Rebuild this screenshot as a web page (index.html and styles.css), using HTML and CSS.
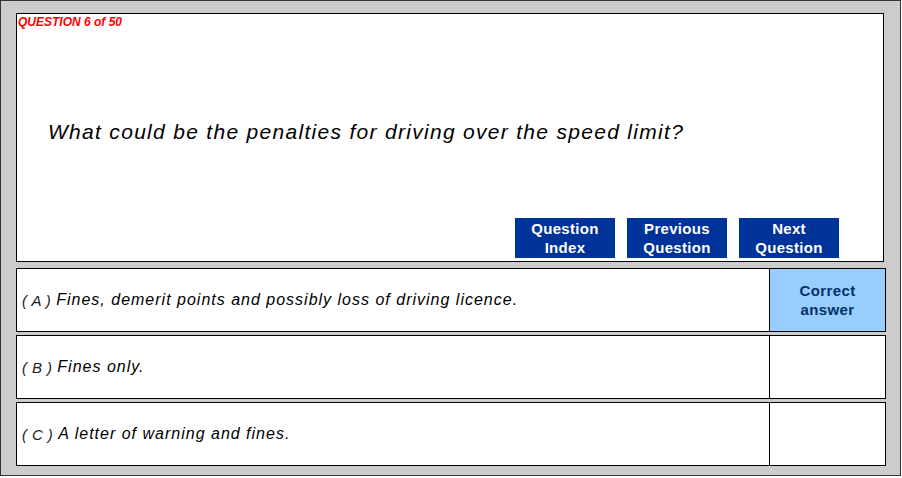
FILE: index.html
```html
<!DOCTYPE html>
<html lang="en">
<head>
    <meta charset="UTF-8">
    <title>Question 6 of 50</title>
    <link rel="stylesheet" href="styles.css">
</head>
<body>
    <div class="quiz">
        <div class="panel">
            <p class="counter">QUESTION 6 of 50</p>
            <p class="question">What could be the penalties for driving over the speed limit?</p>
            <div class="nav">
                <a class="btn" href="#">Question<br>Index</a>
                <a class="btn" href="#">Previous<br>Question</a>
                <a class="btn" href="#">Next<br>Question</a>
            </div>
        </div>

        <div class="answers">
            <div class="answer">
                <div class="text"><span class="letter">( A )</span> Fines, demerit points and possibly loss of driving licence.</div>
                <div class="result correct">Correct<br>answer</div>
            </div>
            <div class="answer">
                <div class="text"><span class="letter">( B )</span> Fines only.</div>
                <div class="result"></div>
            </div>
            <div class="answer">
                <div class="text"><span class="letter">( C )</span> A letter of warning and fines.</div>
                <div class="result"></div>
            </div>
        </div>
    </div>
</body>
</html>
```

FILE: styles.css
```css
body{
    margin: 0;
    font-family: "Liberation Sans", Arial, sans-serif;
}

.quiz{
    width: 870px;
    height: 453px;
    padding: 12px 14px 9px 15px;
    background: #cccccc;
    border: 1px solid #333;
}

/* QUESTION */
.panel{
    width: 866px;
    height: 247px;
    background: white;
    border: 1px solid black;
    display: flex;
    flex-direction: column;
}

.counter{
    margin: 1px 0 0 1px;
    color: #ff0000;
    font-size: 12px;
    font-weight: bold;
    font-style: italic;
    line-height: 14px;
}

.question{
    margin: 91px 0 0 31px;
    font-size: 21px;
    font-style: italic;
    letter-spacing: 1.3px;
    line-height: 24px;
}

.nav{
    margin-top: auto;
    margin-bottom: 3px;
    margin-right: 44px;
    display: flex;
    justify-content: flex-end;
    gap: 12px;
}

.btn{
    width: 100px;
    height: 40px;
    background: #003399;
    color: white;
    font-size: 15px;
    font-weight: bold;
    letter-spacing: 0.3px;
    line-height: 19px;
    text-align: center;
    text-decoration: none;
    display: flex;
    align-items: center;
    justify-content: center;
}

/* ANSWERS */
.answers{
    margin-top: 6px;
    display: flex;
    flex-direction: column;
    gap: 3px;
}

.answer{
    width: 868px;
    height: 62px;
    background: white;
    border: 1px solid black;
    display: flex;
}

.text{
    flex: 1;
    padding-left: 5px;
    display: flex;
    align-items: center;
    gap: 5px;
    font-size: 16px;
    font-style: italic;
    letter-spacing: 1px;
}

.letter{
    font-size: 15px;
    font-weight: 300;
    letter-spacing: 0.4px;
    color: #222;
}

.result{
    width: 115px;
    border-left: 1px solid black;
    display: flex;
    align-items: center;
    justify-content: center;
    text-align: center;
    font-size: 15px;
    font-weight: bold;
    letter-spacing: 0.4px;
    line-height: 19px;
    color: #003366;
}

.correct{
    background: #99ccff;
}
```
